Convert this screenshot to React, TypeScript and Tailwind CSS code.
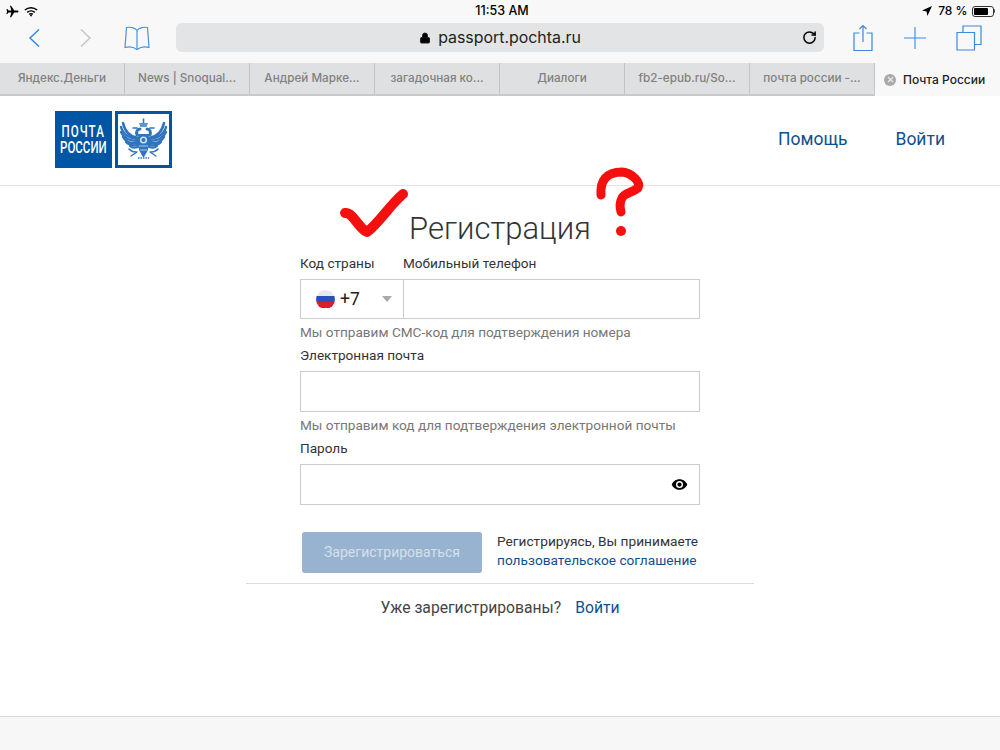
import React from 'react';
import { Lock, RotateCw, X } from 'lucide-react';

const TABS = ['Яндекс.Деньги', 'News | Snoqual...', 'Андрей Марке...', 'загадочная ко...', 'Диалоги', 'fb2-epub.ru/So...', 'почта россии -...'];

const Wing = () => (
  <g fill="none" stroke="#2f74bd" strokeLinecap="round">
    <path d="M26 30 C19 29 13 24 11 15" strokeWidth="2.600" />
    <path d="M26 31 C19 31 11 27 9 19" strokeWidth="2.400" />
    <path d="M26 33 C19 33 12 31 9 24" strokeWidth="2.400" />
    <path d="M26 35 C20 36 14 34 11 29" strokeWidth="2.400" />
    <path d="M26 37 C21 38 17 37 14 34" strokeWidth="2.400" />
    <path d="M26 39 C23 40 20 40 18 38" strokeWidth="2.200" />
    <path d="M24 44 C21 44 19 43 17 41" strokeWidth="1.600" />
    <path d="M28 21 C25 21 24 24 25 27" strokeWidth="3" />
    <path d="M25 20 L21 20" strokeWidth="1.600" />
    <path d="M25 44 L19 48" strokeWidth="1.400" />
  </g>
);

const Eagle = () => (
  <svg viewBox="6 6 51 51" className="w-[51px] h-[51px]">
    <Wing />
    <g transform="matrix(-1 0 0 1 63 0)">
      <Wing />
    </g>
    <path d="M27 15 h9 l-1.500 4 h-6Z" fill="#5b95d2" />
    <path d="M31.500 10.500 v4.500" stroke="#2f74bd" strokeWidth="1.600" />
    <path d="M26 26 h11 l-1 16 l-4.500 8 l-4.500 -8Z" fill="#2f74bd" />
    <circle cx="31.500" cy="32" r="3.600" fill="#cfe0f2" />
    <circle cx="31.500" cy="32" r="2" fill="#2f74bd" />
    <path d="M27 38 h9 M28 42 h7" stroke="#cfe0f2" strokeWidth="0.800" />
    <path d="M26 50 h11" stroke="#5b95d2" strokeWidth="2" strokeDasharray="1.500 1" />
  </svg>
);

const Field = ({ label, hint, eye }: { label: string; hint?: string; eye?: boolean }) => (
  <div>
    <div className="text-[13.600px] leading-[19px] text-[#333] mb-[6px]">{label}</div>
    <div className="h-[41px] border border-[#ccc] bg-white flex items-center justify-end pr-[11px]">
      {eye && (
        <svg viewBox="0 0 24 24" className="w-[17px] h-[17px]" fill="#000">
          <path d="M12 4.500C7 4.500 2.700 7.600 1 12c1.700 4.400 6 7.500 11 7.500s9.300-3.100 11-7.500c-1.700-4.400-6-7.500-11-7.500zM12 17a5 5 0 1 1 0-10 5 5 0 0 1 0 10zm0-8a3 3 0 1 0 0 6 3 3 0 0 0 0-6z" />
        </svg>
      )}
    </div>
    {hint && <div className="text-[13.600px] leading-[20px] text-[#777] mt-[3px]">{hint}</div>}
  </div>
);

export default function App() {
  return (
    <div className="relative w-[1000px] h-[750px] overflow-hidden bg-white flex flex-col font-['Roboto',sans-serif]">
      {/* status bar */}
      <div className="h-[21px] shrink-0 bg-[#f8f8f8] flex items-center justify-between pl-[6px] pr-[5px] pt-[1px] font-['Inter',sans-serif] text-[12.500px] font-medium text-black relative">
        <div className="flex items-center gap-[5px]">
          <svg viewBox="0 0 24 24" className="w-[13px] h-[13px]" fill="#000">
            <path d="M23 12c0-1-1-1.800-2.200-1.800h-5.600L9.500 1.500H7.300l2.700 8.700H4.700L2.500 7.500H.8L2 12 .8 16.500h1.700l2.200-2.700H10l-2.700 8.700h2.200l5.700-8.700h5.600C22 13.800 23 13 23 12z" />
          </svg>
          <svg viewBox="0 0 24 18" className="w-[14px] h-[11px]" fill="none" stroke="#000" strokeWidth="2.600">
            <path d="M1.500 6.500C7.500 1 16.500 1 22.500 6.500M5.500 10.500c3.700-3.200 9.300-3.200 13 0M9 14c1.800-1.300 4.200-1.300 6 0" />
            <path d="M12 18l-2-2.500c1.200-.8 2.800-.8 4 0z" fill="#000" stroke="none" />
          </svg>
        </div>
        <div className="absolute left-[4px] right-0 text-center">11:53 AM</div>
        <div className="flex items-center">
          <svg viewBox="0 0 12 12" className="w-[10px] h-[10px] mr-[6px]" fill="#000">
            <path d="M12 0L0 5.500l5.500 1 1 5.500z" />
          </svg>
          <span className="text-[12px] mr-[4px]">78 %</span>
          <div className="w-[22px] h-[11px] border border-[#333] rounded-[3px] p-[1px]">
            <div className="h-full w-[78%] bg-black rounded-[1px]" />
          </div>
          <div className="w-[1.500px] h-[4px] bg-[#555] rounded-r-[1px]" />
        </div>
      </div>

      {/* nav */}
      <div className="h-[42px] shrink-0 bg-[#f8f8f8] flex items-center pb-[9px] font-['Inter',sans-serif]">
        <svg viewBox="0 0 12 20" className="w-[12px] h-[20px] ml-[28px] text-[#2f86e0]" fill="none" stroke="currentColor" strokeWidth="1.400">
          <path d="M11 1.500L2 10l9 8.500" />
        </svg>
        <svg viewBox="0 0 12 20" className="w-[12px] h-[20px] ml-[40px] text-[#c4c4c4]" fill="none" stroke="currentColor" strokeWidth="1.400">
          <path d="M1 1.500L10 10l-9 8.500" />
        </svg>
        <svg viewBox="0 0 26 24" className="w-[26px] h-[24px] ml-[32px] text-[#4a93df]" fill="none" stroke="currentColor" strokeWidth="1.200">
          <path d="M13 4.500C11 1.500 6 .800 2.500 1.500L1 21.500c4-1 8.500-.500 12 2 3.500-2.500 8-3 12-2L23.500 1.500C20 .800 15 1.500 13 4.500z" />
          <path d="M13 4.500v19" />
        </svg>
        <div className="relative w-[648px] h-[29px] ml-[26px] rounded-[6px] bg-[#e3e4e6] flex items-center justify-center text-[15.900px] text-[#222]">
          <Lock size={12} fill="#000" className="mr-[7px]" />
          passport.pochta.ru
          <RotateCw size={15} strokeWidth={2.400} className="absolute right-[7px] text-black" />
        </div>
        <svg viewBox="0 0 20 28" className="w-[20px] h-[28px] ml-[29px] text-[#3b8ade]" fill="none" stroke="currentColor" strokeWidth="1.200">
          <path d="M6.500 9H1v17.500h18V9h-5.500M10 18V1.500M6.500 5L10 1.500 13.500 5" />
        </svg>
        <svg viewBox="0 0 22 22" className="w-[22px] h-[22px] ml-[31px] text-[#3b8ade]" fill="none" stroke="currentColor" strokeWidth="1.100">
          <path d="M11 0v22M0 11h22" />
        </svg>
        <svg viewBox="0 0 26 26" className="w-[26px] h-[26px] ml-[30px] text-[#3b8ade]" fill="none" stroke="currentColor" strokeWidth="1.200">
          <path d="M1 7.500h17.500V25H1z" />
          <path d="M7 7.500V1h18v18.500h-6.500" />
        </svg>
      </div>

      {/* tabs */}
      <div className="h-[33px] shrink-0 flex bg-[#dfe0e2] border-b-2 border-[#c9c9cb] font-['Inter',sans-serif] text-[11.700px] font-medium text-[#808080]">
        {TABS.map(tab => (
          <div key={tab} className="w-[125px] border-r border-[#c4c4c6] last:border-r-0 flex items-center justify-center whitespace-nowrap">
            {tab}
          </div>
        ))}
        <div className="flex-1 bg-[#f8f8f8] flex items-center text-[#222] pl-[9px] text-[12px] -mb-[2px]">
          <span className="w-[12px] h-[12px] rounded-full bg-[#a9a9a9] flex items-center justify-center mr-[7px] shrink-0">
            <X size={9} strokeWidth={3} className="text-[#eee]" />
          </span>
          Почта России
        </div>
      </div>

      {/* header */}
      <div className="h-[90px] shrink-0 border-b border-[#e2e2e2] flex items-center justify-between pl-[55px] pr-[55px]">
        <div className="flex gap-[3px] -mt-[2px]">
          <div className="w-[57px] h-[57px] bg-[#0055a5] text-white flex flex-col items-center justify-center font-['Roboto',sans-serif] font-medium text-[16px] leading-[16px] whitespace-nowrap">
            <span className="inline-block scale-x-[0.72] tracking-[1.500px]">ПОЧТА</span>
            <span className="inline-block scale-x-[0.72]">РОССИИ</span>
          </div>
          <div className="w-[57px] h-[57px] border-[3px] border-[#0055a5] flex items-center justify-center">
            <Eagle />
          </div>
        </div>
        <div className="flex gap-[48px] text-[17.500px] text-[#0f4f8f] -mt-[2px]">
          <span>Помощь</span>
          <span>Войти</span>
        </div>
      </div>

      {/* form */}
      <div className="w-[400px] mx-auto flex flex-col">
        <h1 className="text-[31px] leading-[40px] font-light text-[#333] text-center mt-[23px]">Регистрация</h1>
        <div className="flex text-[13.600px] leading-[20px] text-[#333] mt-[4px] mb-[6px]">
          <span className="w-[103px]">Код страны</span>
          <span>Мобильный телефон</span>
        </div>
        <div className="flex h-[40px] border border-[#ccc]">
          <div className="w-[103px] border-r border-[#ccc] flex items-center pl-[15px] text-[17.500px] text-[#222] shrink-0">
            <span className="w-[19px] h-[19px] rounded-full overflow-hidden flex flex-col mr-[5px]">
              <span className="flex-1 bg-[#e8e8ee]" />
              <span className="flex-1 bg-[#2a50b8]" />
              <span className="flex-1 bg-[#d8202c]" />
            </span>
            +7
            <span className="ml-auto mr-[11px] w-0 h-0 border-l-[5px] border-r-[5px] border-t-[6px] border-l-transparent border-r-transparent border-t-[#aaa]" />
          </div>
          <div className="flex-1 bg-white" />
        </div>
        <div className="text-[13.600px] leading-[20px] text-[#777] mt-[3px] mb-[4px]">Мы отправим СМС-код для подтверждения номера</div>
        <Field label="Электронная почта" hint="Мы отправим код для подтверждения электронной почты" />
        <div className="mt-[4px]">
          <Field label="Пароль" eye />
        </div>
        <div className="flex items-center mt-[27px] pl-[2px]">
          <button className="w-[180px] h-[41px] rounded-[3px] bg-[#98b3cf] text-[#d5e0ec] text-[14px]">Зарегистрироваться</button>
          <div className="ml-[15px] -mt-[3px] text-[13.700px] leading-[19px] text-[#333] whitespace-nowrap">
            <div>Регистрируясь, Вы принимаете</div>
            <div className="text-[#0f4f8f]">пользовательское соглашение</div>
          </div>
        </div>
      </div>

      <div className="w-[508px] mx-auto border-t border-[#ddd] mt-[10px] pt-[13px] flex justify-center text-[15.700px] leading-[22px]">
        <span className="text-[#444]">Уже зарегистрированы?</span>
        <span className="text-[#0f4f8f] ml-[14px]">Войти</span>
      </div>

      <div className="flex-1" />
      <div className="h-[34px] shrink-0 bg-[#f7f7f7] border-t border-[#d8d8d8]" />

      {/* red marker scribbles on top */}
      <svg viewBox="0 0 1000 750" className="absolute inset-0 w-[1000px] h-[750px] pointer-events-none" fill="none" stroke="#f50f0f" strokeLinecap="round" strokeLinejoin="round">
        <path d="M345 213 C353 212 358 228 367 232 C378 224 390 205 403 194" strokeWidth="10" />
        <path d="M601 195 C600 181 606 172 622 172 C632 173 641 182 638 188 C632 193 624 193 622 198 C619 203 620 208 621 212" strokeWidth="9" />
        <circle cx="621" cy="231" r="5" fill="#f50f0f" stroke="none" />
      </svg>
    </div>
  );
}
